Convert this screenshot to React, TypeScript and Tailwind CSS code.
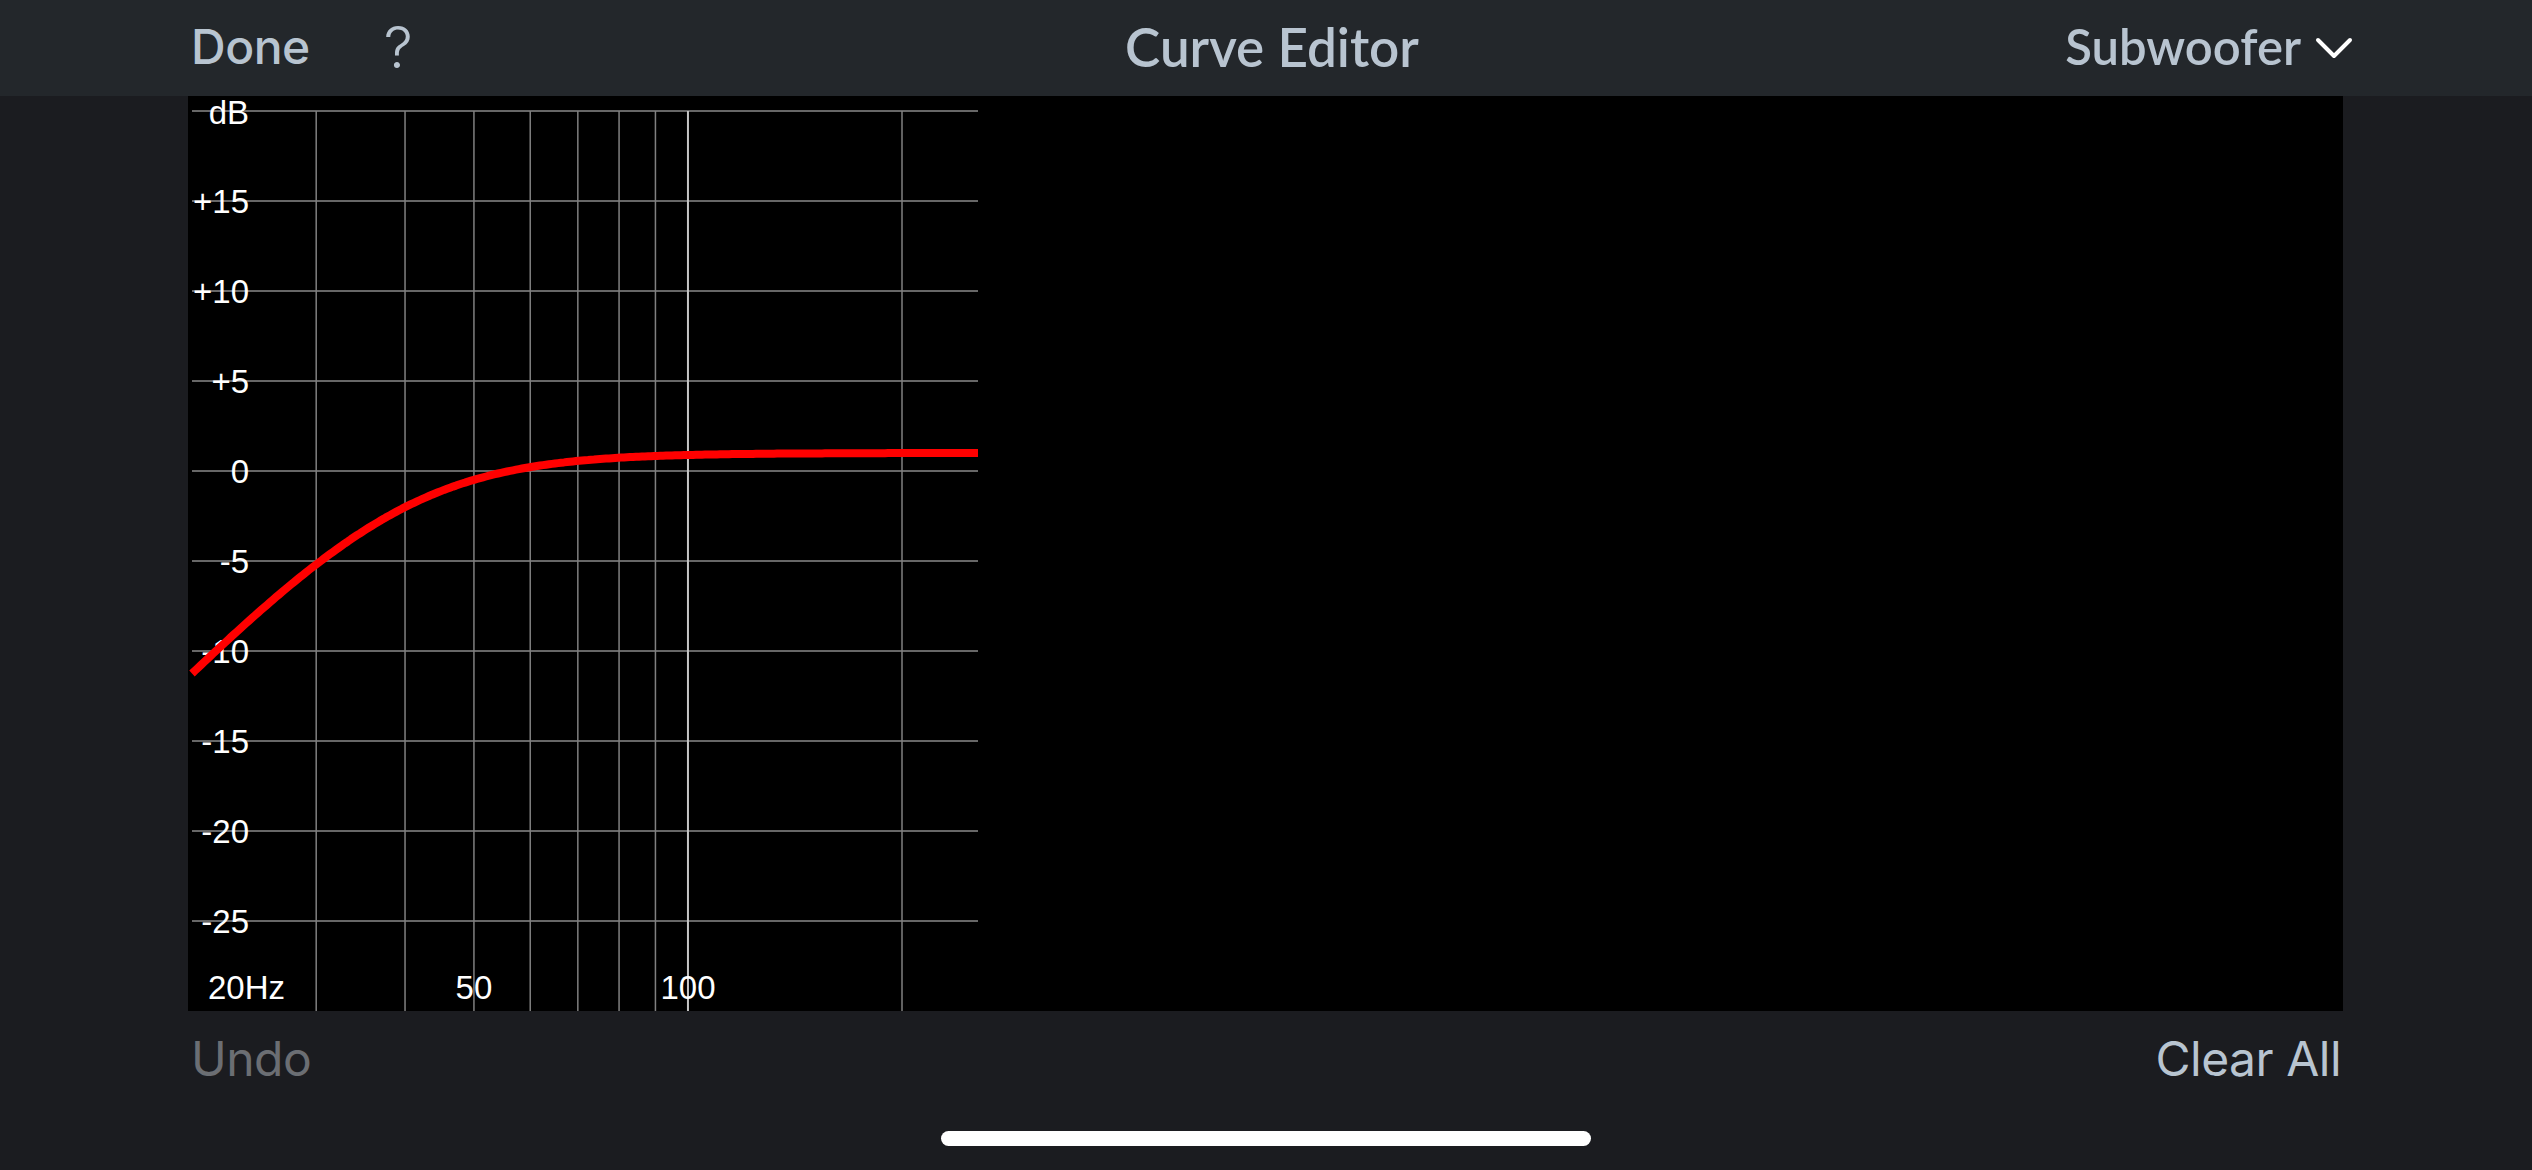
import React from "react";

// chart geometry (svg coords inside the black panel)
const X0 = 3;
const PX_PER_DECADE = 711;
const TOP = 15;
const STEP = 90; // 5 dB
const BOTTOM = 915;
const RIGHT = 790;

const fx = (f: number) => X0 + PX_PER_DECADE * Math.log10(f / 20);
const dy = (db: number) => TOP + (20 - db) * (STEP / 5);

const dbLabels = ["dB", "+15", "+10", "+5", "0", "-5", "-10", "-15", "-20", "-25"];
const freqLines = [30, 40, 50, 60, 70, 80, 90, 100, 200];

function curvePoints() {
    const pts: string[] = [];
    for (let x = 4; x <= RIGHT; x += 3) {
        const f = 20 * Math.pow(10, (x - X0) / PX_PER_DECADE);
        const r4 = Math.pow(f / 40, 4);
        const db = 1 + 10 * Math.log10(r4 / (1 + r4));
        pts.push(`${x},${dy(db).toFixed(1)}`);
    }
    return pts.join(" ");
}

function Chart() {
    return (
        <svg width="2155" height="915" viewBox="0 0 2155 915" className="block">
            {/* horizontal grid */}
            {dbLabels.map((_, i) => (
                <line
                    key={"h" + i}
                    x1={4}
                    x2={RIGHT}
                    y1={TOP + i * STEP}
                    y2={TOP + i * STEP}
                    stroke="#8a8a8a"
                    strokeWidth={1.5}
                />
            ))}
            {/* vertical grid */}
            {freqLines.map((f) => (
                <line
                    key={"v" + f}
                    x1={fx(f)}
                    x2={fx(f)}
                    y1={TOP}
                    y2={BOTTOM}
                    stroke={f === 100 ? "#c4c4c4" : "#808080"}
                    strokeWidth={f === 100 ? 2 : 1.5}
                />
            ))}

            {/* dB labels */}
            <g fill="#ffffff" fontFamily="'Liberation Sans', Arial, sans-serif" fontSize="33">
                {dbLabels.map((t, i) => (
                    <text key={t} x={61} y={TOP + i * STEP + (i === 0 ? 13 : 12)} textAnchor="end">
                        {t}
                    </text>
                ))}
                <text x={20} y={903}>20Hz</text>
                <text x={fx(50)} y={903} textAnchor="middle">50</text>
                <text x={fx(100)} y={903} textAnchor="middle">100</text>
            </g>

            {/* response curve */}
            <polyline points={curvePoints()} fill="none" stroke="#ff0000" strokeWidth={8} strokeLinejoin="round" />
        </svg>
    );
}

export default function App() {
    return (
        <div className="w-[2532px] h-[1170px] bg-[#1b1c20] flex flex-col overflow-hidden">
            {/* Header */}
            <div className="h-[96px] bg-[#23272b] grid grid-cols-[1fr_auto_1fr] items-center pl-[191px] pr-[179px] text-[#b8c4d0]">
                <div className="flex items-center gap-[74px] pb-[3px]">
                    <span className="text-[48px] font-medium tracking-[-0.5px]" style={{ fontFamily: "Inter, 'Noto Sans', sans-serif" }}>
                        Done
                    </span>
                    <span className="text-[58px] font-light leading-none" style={{ fontFamily: "Inter, 'Noto Sans', sans-serif" }}>
                        ?
                    </span>
                </div>
                <div className="text-[53px] font-semibold pb-[3px]" style={{ fontFamily: "Lato, 'Noto Sans', sans-serif" }}>
                    Curve Editor
                </div>
                <div className="flex items-center justify-end gap-[14px] pb-[2px]">
                    <span className="text-[49px] font-semibold" style={{ fontFamily: "Lato, 'Noto Sans', sans-serif" }}>
                        Subwoofer
                    </span>
                    <svg width="38" height="24" viewBox="0 0 38 24" className="mt-[2px]">
                        <polyline points="3,4 19,20 35,4" fill="none" stroke="#ffffff" strokeWidth="4" strokeLinecap="round" strokeLinejoin="round" />
                    </svg>
                </div>
            </div>

            {/* Curve panel */}
            <div className="ml-[188px] w-[2155px] h-[915px] bg-black">
                <Chart />
            </div>

            {/* Footer actions */}
            <div className="h-[90px] flex items-center justify-between pl-[191px] pr-[191px] pt-[5px]" style={{ fontFamily: "Inter, 'Noto Sans', sans-serif" }}>
                <span className="text-[48px] text-[#6b6e73] tracking-[-0.5px]">Undo</span>
                <span className="text-[48px] text-[#b8c4d0] tracking-[-0.5px]">Clear All</span>
            </div>

            {/* Home indicator */}
            <div className="flex justify-center pt-[30px]">
                <div className="w-[650px] h-[15px] rounded-full bg-white" />
            </div>
        </div>
    );
}
